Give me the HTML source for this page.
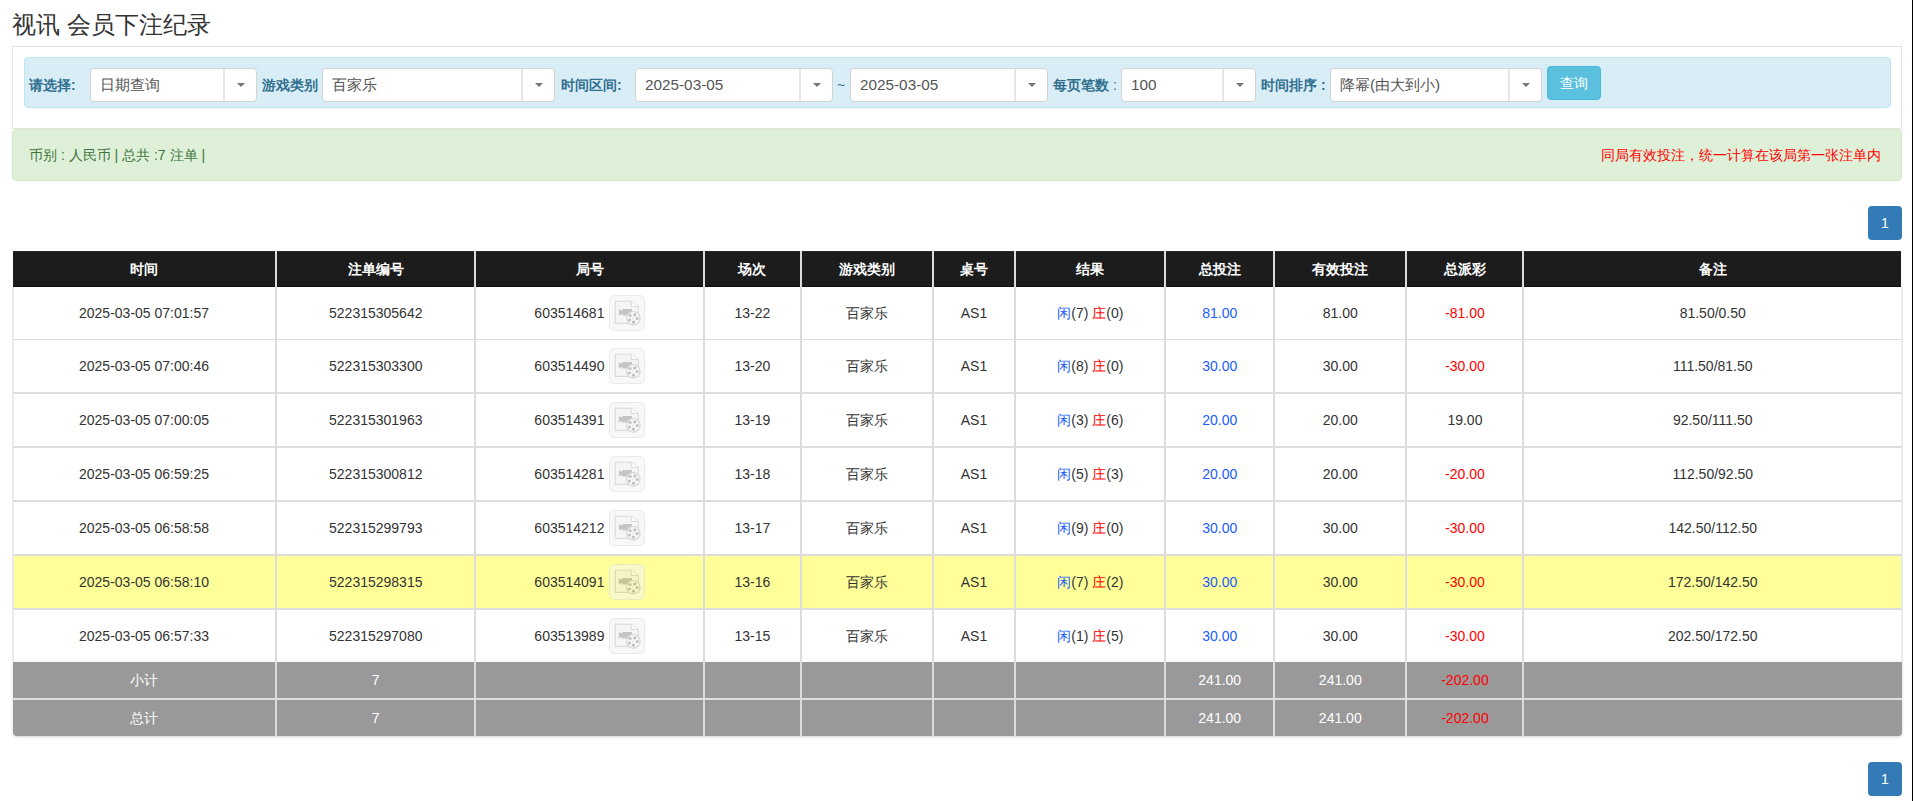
<!DOCTYPE html><html><head><meta charset="utf-8"><title>视讯 会员下注纪录</title><style>
*{box-sizing:border-box;margin:0;padding:0}
html,body{width:1913px;height:801px;overflow:hidden;background:#fff}
body{position:relative;font-family:"Liberation Sans",sans-serif;font-size:14px;color:#333}
.a{position:absolute}
.t{position:absolute;white-space:nowrap;line-height:20px}
.c{position:absolute;display:flex;align-items:center;justify-content:center;white-space:nowrap;line-height:20px}
.sel{position:absolute;top:68px;height:34px;background:#fff;border:1px solid #d3d3d3;border-radius:4px}
.sel .v{position:absolute;left:9px;top:6px;font-size:15.3px;line-height:20px;color:#555}
.sel .d{position:absolute;top:0;bottom:0;width:2px;background:#e6e6e6}
.sel .k{position:absolute;top:14px;width:0;height:0;border-left:4px solid transparent;border-right:4px solid transparent;border-top:4px solid #777}
.lb{position:absolute;top:75px;font-weight:bold;color:#31708f;line-height:20px}
.h{color:#fff;font-weight:bold}
.hl{background:#dcdcdc}
.blue{color:#1a5cff}
.red{color:#ff0000}
</style></head><body>
<div class="t" style="left:12px;top:11px;font-size:24px;line-height:28px;color:#333">视讯 会员下注纪录</div>
<div class="a" style="left:12px;top:46px;width:1890px;height:83px;border:1px solid #e3e3e3;background:#fff"></div>
<div class="a" style="left:24px;top:57px;width:1867px;height:51px;border:1px solid #bce8f1;background:#d9edf7;border-radius:4px"></div>
<div class="lb" style="left:29px">请选择:</div>
<div class="lb" style="left:262px">游戏类别</div>
<div class="lb" style="left:561px">时间区间:</div>
<div class="lb" style="left:1053px">每页笔数<span style="font-weight:normal"> :</span></div>
<div class="lb" style="left:1261px">时间排序 :</div>
<div class="lb" style="left:837px;font-weight:normal">~</div>
<div class="sel" style="left:90px;width:167px"><div class="v">日期查询</div><div class="d" style="left:132px"></div><div class="k" style="left:146px"></div></div>
<div class="sel" style="left:322px;width:233px"><div class="v">百家乐</div><div class="d" style="left:198px"></div><div class="k" style="left:212px"></div></div>
<div class="sel" style="left:635px;width:198px"><div class="v">2025-03-05</div><div class="d" style="left:163px"></div><div class="k" style="left:177px"></div></div>
<div class="sel" style="left:850px;width:198px"><div class="v">2025-03-05</div><div class="d" style="left:163px"></div><div class="k" style="left:177px"></div></div>
<div class="sel" style="left:1121px;width:135px"><div class="v">100</div><div class="d" style="left:100px"></div><div class="k" style="left:114px"></div></div>
<div class="sel" style="left:1330px;width:212px"><div class="v">降幂(由大到小)</div><div class="d" style="left:177px"></div><div class="k" style="left:191px"></div></div>
<div class="c" style="left:1547px;top:66px;width:54px;height:34px;background:#5bc0de;border:1px solid #46b8da;border-radius:4px;color:#fff">查询</div>
<div class="a" style="left:12px;top:129px;width:1890px;height:52px;border:1px solid #d6e9c6;background:#dff0d8;border-radius:4px"></div>
<div class="t" style="left:29px;top:145px;color:#3c763d">币别 : 人民币 | 总共 :7 注单 |</div>
<div class="t" style="right:32px;top:145px;color:#ff0000">同局有效投注，统一计算在该局第一张注单内</div>
<div class="c" style="left:1868px;top:206px;width:34px;height:34px;background:#337ab7;border-radius:4px;color:#fff">1</div>
<div class="c" style="left:1868px;top:762px;width:34px;height:34px;background:#337ab7;border-radius:4px;color:#fff">1</div>
<div class="a" style="left:1912px;top:0;width:1px;height:801px;background:#000"></div>
<div class="a" style="left:13px;top:251px;width:1888px;height:36px;background:#1c1c1c;border-top:1px solid #282828;border-bottom:1px solid #0c0c0c"></div>
<div class="a" style="left:12px;top:287px;width:1891px;height:375px;background:#fff;border-left:2px solid #ebebeb;border-right:2px solid #ebebeb"></div>
<div class="a" style="left:14px;top:556px;width:1887px;height:52px;background:#ffff99"></div>
<div class="a hl" style="left:13px;top:339px;width:1889px;height:1px"></div>
<div class="a hl" style="left:13px;top:392px;width:1889px;height:2px"></div>
<div class="a hl" style="left:13px;top:446px;width:1889px;height:2px"></div>
<div class="a hl" style="left:13px;top:500px;width:1889px;height:2px"></div>
<div class="a hl" style="left:13px;top:554px;width:1889px;height:2px"></div>
<div class="a hl" style="left:13px;top:608px;width:1889px;height:2px"></div>
<div class="a" style="left:13px;top:662px;width:1889px;height:74px;background:#999;border-radius:0 0 4px 4px;box-shadow:0 1px 3px rgba(0,0,0,.18)"></div>
<div class="a" style="left:12px;top:698px;width:1890px;height:2px;background:#e0e0e0"></div>
<div class="a" style="left:275px;top:251px;width:2px;height:485px;background:#dcdcdc"></div>
<div class="a" style="left:474px;top:251px;width:2px;height:485px;background:#dcdcdc"></div>
<div class="a" style="left:703px;top:251px;width:2px;height:485px;background:#dcdcdc"></div>
<div class="a" style="left:800px;top:251px;width:2px;height:485px;background:#dcdcdc"></div>
<div class="a" style="left:932px;top:251px;width:2px;height:485px;background:#dcdcdc"></div>
<div class="a" style="left:1014px;top:251px;width:2px;height:485px;background:#dcdcdc"></div>
<div class="a" style="left:1164px;top:251px;width:2px;height:485px;background:#dcdcdc"></div>
<div class="a" style="left:1273px;top:251px;width:2px;height:485px;background:#dcdcdc"></div>
<div class="a" style="left:1405px;top:251px;width:2px;height:485px;background:#dcdcdc"></div>
<div class="a" style="left:1522px;top:251px;width:2px;height:485px;background:#dcdcdc"></div>
<div class="c h" style="left:12.0px;top:251px;width:264.0px;height:36px;"><span>时间</span></div>
<div class="c h" style="left:276.0px;top:251px;width:199.5px;height:36px;"><span>注单编号</span></div>
<div class="c h" style="left:475.5px;top:251px;width:228.8px;height:36px;"><span>局号</span></div>
<div class="c h" style="left:704.3px;top:251px;width:96.2px;height:36px;"><span>场次</span></div>
<div class="c h" style="left:800.5px;top:251px;width:132.0px;height:36px;"><span>游戏类别</span></div>
<div class="c h" style="left:932.5px;top:251px;width:83.0px;height:36px;"><span>桌号</span></div>
<div class="c h" style="left:1015.5px;top:251px;width:149.8px;height:36px;"><span>结果</span></div>
<div class="c h" style="left:1165.3px;top:251px;width:108.9px;height:36px;"><span>总投注</span></div>
<div class="c h" style="left:1274.2px;top:251px;width:132.2px;height:36px;"><span>有效投注</span></div>
<div class="c h" style="left:1406.4px;top:251px;width:117.1px;height:36px;"><span>总派彩</span></div>
<div class="c h" style="left:1523.5px;top:251px;width:378.5px;height:36px;"><span>备注</span></div>
<div class="c " style="left:12.0px;top:287px;width:264.0px;height:52px;"><span>2025-03-05 07:01:57</span></div>
<div class="c " style="left:276.0px;top:287px;width:199.5px;height:52px;"><span>522315305642</span></div>
<div class="c " style="left:475.5px;top:287px;width:228.8px;height:52px;"><span><span style="margin-left:0">603514681</span><svg width="36" height="36" viewBox="0 0 36 36" style="margin:-12px 0 -12px 5px;opacity:.53;vertical-align:middle;position:relative;top:-1px"><rect x="0.5" y="0.5" width="35" height="35" rx="5" fill="#f2f2f2" stroke="#d9d9d9"/><path d="M6.2 6.3 H22.3 L29.4 11.5 V28.4 H6.2 Z" fill="#eeeeee" stroke="#bcbcbc" stroke-width="1.1"/><path d="M22.3 6.3 V11.5 H29.4" fill="#fafafa" stroke="#bcbcbc" stroke-width="1.1"/><path d="M9.9 14.1 L11.4 15.3 H13.6 V14.1 H23 V20.5 H13.6 V19.4 H11.4 L9.9 20.5 Z" fill="#939393"/><circle cx="24.3" cy="23.3" r="6.8" fill="#f0f0f0" stroke="#b0b0b0" stroke-width="1.1"/><circle cx="21.1" cy="20.5" r="1.6" fill="#8c8c8c"/><circle cx="25.8" cy="19.9" r="1.6" fill="#8c8c8c"/><circle cx="28.2" cy="23.5" r="1.6" fill="#8c8c8c"/><circle cx="20.4" cy="25" r="1.6" fill="#8c8c8c"/><circle cx="24.5" cy="27.2" r="1.6" fill="#8c8c8c"/><circle cx="23.8" cy="23.2" r="0.5" fill="#8c8c8c"/></svg></span></div>
<div class="c " style="left:704.3px;top:287px;width:96.2px;height:52px;"><span>13-22</span></div>
<div class="c " style="left:800.5px;top:287px;width:132.0px;height:52px;"><span>百家乐</span></div>
<div class="c " style="left:932.5px;top:287px;width:83.0px;height:52px;"><span>AS1</span></div>
<div class="c " style="left:1015.5px;top:287px;width:149.8px;height:52px;"><span><span class="blue">闲</span>(7) <span class="red">庄</span>(0)</span></div>
<div class="c blue" style="left:1165.3px;top:287px;width:108.9px;height:52px;"><span>81.00</span></div>
<div class="c " style="left:1274.2px;top:287px;width:132.2px;height:52px;"><span>81.00</span></div>
<div class="c red" style="left:1406.4px;top:287px;width:117.1px;height:52px;"><span>-81.00</span></div>
<div class="c " style="left:1523.5px;top:287px;width:378.5px;height:52px;"><span>81.50/0.50</span></div>
<div class="c " style="left:12.0px;top:339px;width:264.0px;height:54px;"><span>2025-03-05 07:00:46</span></div>
<div class="c " style="left:276.0px;top:339px;width:199.5px;height:54px;"><span>522315303300</span></div>
<div class="c " style="left:475.5px;top:339px;width:228.8px;height:54px;"><span><span style="margin-left:0">603514490</span><svg width="36" height="36" viewBox="0 0 36 36" style="margin:-12px 0 -12px 5px;opacity:.53;vertical-align:middle;position:relative;top:-1px"><rect x="0.5" y="0.5" width="35" height="35" rx="5" fill="#f2f2f2" stroke="#d9d9d9"/><path d="M6.2 6.3 H22.3 L29.4 11.5 V28.4 H6.2 Z" fill="#eeeeee" stroke="#bcbcbc" stroke-width="1.1"/><path d="M22.3 6.3 V11.5 H29.4" fill="#fafafa" stroke="#bcbcbc" stroke-width="1.1"/><path d="M9.9 14.1 L11.4 15.3 H13.6 V14.1 H23 V20.5 H13.6 V19.4 H11.4 L9.9 20.5 Z" fill="#939393"/><circle cx="24.3" cy="23.3" r="6.8" fill="#f0f0f0" stroke="#b0b0b0" stroke-width="1.1"/><circle cx="21.1" cy="20.5" r="1.6" fill="#8c8c8c"/><circle cx="25.8" cy="19.9" r="1.6" fill="#8c8c8c"/><circle cx="28.2" cy="23.5" r="1.6" fill="#8c8c8c"/><circle cx="20.4" cy="25" r="1.6" fill="#8c8c8c"/><circle cx="24.5" cy="27.2" r="1.6" fill="#8c8c8c"/><circle cx="23.8" cy="23.2" r="0.5" fill="#8c8c8c"/></svg></span></div>
<div class="c " style="left:704.3px;top:339px;width:96.2px;height:54px;"><span>13-20</span></div>
<div class="c " style="left:800.5px;top:339px;width:132.0px;height:54px;"><span>百家乐</span></div>
<div class="c " style="left:932.5px;top:339px;width:83.0px;height:54px;"><span>AS1</span></div>
<div class="c " style="left:1015.5px;top:339px;width:149.8px;height:54px;"><span><span class="blue">闲</span>(8) <span class="red">庄</span>(0)</span></div>
<div class="c blue" style="left:1165.3px;top:339px;width:108.9px;height:54px;"><span>30.00</span></div>
<div class="c " style="left:1274.2px;top:339px;width:132.2px;height:54px;"><span>30.00</span></div>
<div class="c red" style="left:1406.4px;top:339px;width:117.1px;height:54px;"><span>-30.00</span></div>
<div class="c " style="left:1523.5px;top:339px;width:378.5px;height:54px;"><span>111.50/81.50</span></div>
<div class="c " style="left:12.0px;top:393px;width:264.0px;height:54px;"><span>2025-03-05 07:00:05</span></div>
<div class="c " style="left:276.0px;top:393px;width:199.5px;height:54px;"><span>522315301963</span></div>
<div class="c " style="left:475.5px;top:393px;width:228.8px;height:54px;"><span><span style="margin-left:0">603514391</span><svg width="36" height="36" viewBox="0 0 36 36" style="margin:-12px 0 -12px 5px;opacity:.53;vertical-align:middle;position:relative;top:-1px"><rect x="0.5" y="0.5" width="35" height="35" rx="5" fill="#f2f2f2" stroke="#d9d9d9"/><path d="M6.2 6.3 H22.3 L29.4 11.5 V28.4 H6.2 Z" fill="#eeeeee" stroke="#bcbcbc" stroke-width="1.1"/><path d="M22.3 6.3 V11.5 H29.4" fill="#fafafa" stroke="#bcbcbc" stroke-width="1.1"/><path d="M9.9 14.1 L11.4 15.3 H13.6 V14.1 H23 V20.5 H13.6 V19.4 H11.4 L9.9 20.5 Z" fill="#939393"/><circle cx="24.3" cy="23.3" r="6.8" fill="#f0f0f0" stroke="#b0b0b0" stroke-width="1.1"/><circle cx="21.1" cy="20.5" r="1.6" fill="#8c8c8c"/><circle cx="25.8" cy="19.9" r="1.6" fill="#8c8c8c"/><circle cx="28.2" cy="23.5" r="1.6" fill="#8c8c8c"/><circle cx="20.4" cy="25" r="1.6" fill="#8c8c8c"/><circle cx="24.5" cy="27.2" r="1.6" fill="#8c8c8c"/><circle cx="23.8" cy="23.2" r="0.5" fill="#8c8c8c"/></svg></span></div>
<div class="c " style="left:704.3px;top:393px;width:96.2px;height:54px;"><span>13-19</span></div>
<div class="c " style="left:800.5px;top:393px;width:132.0px;height:54px;"><span>百家乐</span></div>
<div class="c " style="left:932.5px;top:393px;width:83.0px;height:54px;"><span>AS1</span></div>
<div class="c " style="left:1015.5px;top:393px;width:149.8px;height:54px;"><span><span class="blue">闲</span>(3) <span class="red">庄</span>(6)</span></div>
<div class="c blue" style="left:1165.3px;top:393px;width:108.9px;height:54px;"><span>20.00</span></div>
<div class="c " style="left:1274.2px;top:393px;width:132.2px;height:54px;"><span>20.00</span></div>
<div class="c " style="left:1406.4px;top:393px;width:117.1px;height:54px;"><span>19.00</span></div>
<div class="c " style="left:1523.5px;top:393px;width:378.5px;height:54px;"><span>92.50/111.50</span></div>
<div class="c " style="left:12.0px;top:447px;width:264.0px;height:54px;"><span>2025-03-05 06:59:25</span></div>
<div class="c " style="left:276.0px;top:447px;width:199.5px;height:54px;"><span>522315300812</span></div>
<div class="c " style="left:475.5px;top:447px;width:228.8px;height:54px;"><span><span style="margin-left:0">603514281</span><svg width="36" height="36" viewBox="0 0 36 36" style="margin:-12px 0 -12px 5px;opacity:.53;vertical-align:middle;position:relative;top:-1px"><rect x="0.5" y="0.5" width="35" height="35" rx="5" fill="#f2f2f2" stroke="#d9d9d9"/><path d="M6.2 6.3 H22.3 L29.4 11.5 V28.4 H6.2 Z" fill="#eeeeee" stroke="#bcbcbc" stroke-width="1.1"/><path d="M22.3 6.3 V11.5 H29.4" fill="#fafafa" stroke="#bcbcbc" stroke-width="1.1"/><path d="M9.9 14.1 L11.4 15.3 H13.6 V14.1 H23 V20.5 H13.6 V19.4 H11.4 L9.9 20.5 Z" fill="#939393"/><circle cx="24.3" cy="23.3" r="6.8" fill="#f0f0f0" stroke="#b0b0b0" stroke-width="1.1"/><circle cx="21.1" cy="20.5" r="1.6" fill="#8c8c8c"/><circle cx="25.8" cy="19.9" r="1.6" fill="#8c8c8c"/><circle cx="28.2" cy="23.5" r="1.6" fill="#8c8c8c"/><circle cx="20.4" cy="25" r="1.6" fill="#8c8c8c"/><circle cx="24.5" cy="27.2" r="1.6" fill="#8c8c8c"/><circle cx="23.8" cy="23.2" r="0.5" fill="#8c8c8c"/></svg></span></div>
<div class="c " style="left:704.3px;top:447px;width:96.2px;height:54px;"><span>13-18</span></div>
<div class="c " style="left:800.5px;top:447px;width:132.0px;height:54px;"><span>百家乐</span></div>
<div class="c " style="left:932.5px;top:447px;width:83.0px;height:54px;"><span>AS1</span></div>
<div class="c " style="left:1015.5px;top:447px;width:149.8px;height:54px;"><span><span class="blue">闲</span>(5) <span class="red">庄</span>(3)</span></div>
<div class="c blue" style="left:1165.3px;top:447px;width:108.9px;height:54px;"><span>20.00</span></div>
<div class="c " style="left:1274.2px;top:447px;width:132.2px;height:54px;"><span>20.00</span></div>
<div class="c red" style="left:1406.4px;top:447px;width:117.1px;height:54px;"><span>-20.00</span></div>
<div class="c " style="left:1523.5px;top:447px;width:378.5px;height:54px;"><span>112.50/92.50</span></div>
<div class="c " style="left:12.0px;top:501px;width:264.0px;height:54px;"><span>2025-03-05 06:58:58</span></div>
<div class="c " style="left:276.0px;top:501px;width:199.5px;height:54px;"><span>522315299793</span></div>
<div class="c " style="left:475.5px;top:501px;width:228.8px;height:54px;"><span><span style="margin-left:0">603514212</span><svg width="36" height="36" viewBox="0 0 36 36" style="margin:-12px 0 -12px 5px;opacity:.53;vertical-align:middle;position:relative;top:-1px"><rect x="0.5" y="0.5" width="35" height="35" rx="5" fill="#f2f2f2" stroke="#d9d9d9"/><path d="M6.2 6.3 H22.3 L29.4 11.5 V28.4 H6.2 Z" fill="#eeeeee" stroke="#bcbcbc" stroke-width="1.1"/><path d="M22.3 6.3 V11.5 H29.4" fill="#fafafa" stroke="#bcbcbc" stroke-width="1.1"/><path d="M9.9 14.1 L11.4 15.3 H13.6 V14.1 H23 V20.5 H13.6 V19.4 H11.4 L9.9 20.5 Z" fill="#939393"/><circle cx="24.3" cy="23.3" r="6.8" fill="#f0f0f0" stroke="#b0b0b0" stroke-width="1.1"/><circle cx="21.1" cy="20.5" r="1.6" fill="#8c8c8c"/><circle cx="25.8" cy="19.9" r="1.6" fill="#8c8c8c"/><circle cx="28.2" cy="23.5" r="1.6" fill="#8c8c8c"/><circle cx="20.4" cy="25" r="1.6" fill="#8c8c8c"/><circle cx="24.5" cy="27.2" r="1.6" fill="#8c8c8c"/><circle cx="23.8" cy="23.2" r="0.5" fill="#8c8c8c"/></svg></span></div>
<div class="c " style="left:704.3px;top:501px;width:96.2px;height:54px;"><span>13-17</span></div>
<div class="c " style="left:800.5px;top:501px;width:132.0px;height:54px;"><span>百家乐</span></div>
<div class="c " style="left:932.5px;top:501px;width:83.0px;height:54px;"><span>AS1</span></div>
<div class="c " style="left:1015.5px;top:501px;width:149.8px;height:54px;"><span><span class="blue">闲</span>(9) <span class="red">庄</span>(0)</span></div>
<div class="c blue" style="left:1165.3px;top:501px;width:108.9px;height:54px;"><span>30.00</span></div>
<div class="c " style="left:1274.2px;top:501px;width:132.2px;height:54px;"><span>30.00</span></div>
<div class="c red" style="left:1406.4px;top:501px;width:117.1px;height:54px;"><span>-30.00</span></div>
<div class="c " style="left:1523.5px;top:501px;width:378.5px;height:54px;"><span>142.50/112.50</span></div>
<div class="c " style="left:12.0px;top:555px;width:264.0px;height:54px;"><span>2025-03-05 06:58:10</span></div>
<div class="c " style="left:276.0px;top:555px;width:199.5px;height:54px;"><span>522315298315</span></div>
<div class="c " style="left:475.5px;top:555px;width:228.8px;height:54px;"><span><span style="margin-left:0">603514091</span><svg width="36" height="36" viewBox="0 0 36 36" style="margin:-12px 0 -12px 5px;opacity:.53;vertical-align:middle;position:relative;top:-1px"><rect x="0.5" y="0.5" width="35" height="35" rx="5" fill="#f2f2f2" stroke="#d9d9d9"/><path d="M6.2 6.3 H22.3 L29.4 11.5 V28.4 H6.2 Z" fill="#eeeeee" stroke="#bcbcbc" stroke-width="1.1"/><path d="M22.3 6.3 V11.5 H29.4" fill="#fafafa" stroke="#bcbcbc" stroke-width="1.1"/><path d="M9.9 14.1 L11.4 15.3 H13.6 V14.1 H23 V20.5 H13.6 V19.4 H11.4 L9.9 20.5 Z" fill="#939393"/><circle cx="24.3" cy="23.3" r="6.8" fill="#f0f0f0" stroke="#b0b0b0" stroke-width="1.1"/><circle cx="21.1" cy="20.5" r="1.6" fill="#8c8c8c"/><circle cx="25.8" cy="19.9" r="1.6" fill="#8c8c8c"/><circle cx="28.2" cy="23.5" r="1.6" fill="#8c8c8c"/><circle cx="20.4" cy="25" r="1.6" fill="#8c8c8c"/><circle cx="24.5" cy="27.2" r="1.6" fill="#8c8c8c"/><circle cx="23.8" cy="23.2" r="0.5" fill="#8c8c8c"/></svg></span></div>
<div class="c " style="left:704.3px;top:555px;width:96.2px;height:54px;"><span>13-16</span></div>
<div class="c " style="left:800.5px;top:555px;width:132.0px;height:54px;"><span>百家乐</span></div>
<div class="c " style="left:932.5px;top:555px;width:83.0px;height:54px;"><span>AS1</span></div>
<div class="c " style="left:1015.5px;top:555px;width:149.8px;height:54px;"><span><span class="blue">闲</span>(7) <span class="red">庄</span>(2)</span></div>
<div class="c blue" style="left:1165.3px;top:555px;width:108.9px;height:54px;"><span>30.00</span></div>
<div class="c " style="left:1274.2px;top:555px;width:132.2px;height:54px;"><span>30.00</span></div>
<div class="c red" style="left:1406.4px;top:555px;width:117.1px;height:54px;"><span>-30.00</span></div>
<div class="c " style="left:1523.5px;top:555px;width:378.5px;height:54px;"><span>172.50/142.50</span></div>
<div class="c " style="left:12.0px;top:609px;width:264.0px;height:53px;"><span>2025-03-05 06:57:33</span></div>
<div class="c " style="left:276.0px;top:609px;width:199.5px;height:53px;"><span>522315297080</span></div>
<div class="c " style="left:475.5px;top:609px;width:228.8px;height:53px;"><span><span style="margin-left:0">603513989</span><svg width="36" height="36" viewBox="0 0 36 36" style="margin:-12px 0 -12px 5px;opacity:.53;vertical-align:middle;position:relative;top:-1px"><rect x="0.5" y="0.5" width="35" height="35" rx="5" fill="#f2f2f2" stroke="#d9d9d9"/><path d="M6.2 6.3 H22.3 L29.4 11.5 V28.4 H6.2 Z" fill="#eeeeee" stroke="#bcbcbc" stroke-width="1.1"/><path d="M22.3 6.3 V11.5 H29.4" fill="#fafafa" stroke="#bcbcbc" stroke-width="1.1"/><path d="M9.9 14.1 L11.4 15.3 H13.6 V14.1 H23 V20.5 H13.6 V19.4 H11.4 L9.9 20.5 Z" fill="#939393"/><circle cx="24.3" cy="23.3" r="6.8" fill="#f0f0f0" stroke="#b0b0b0" stroke-width="1.1"/><circle cx="21.1" cy="20.5" r="1.6" fill="#8c8c8c"/><circle cx="25.8" cy="19.9" r="1.6" fill="#8c8c8c"/><circle cx="28.2" cy="23.5" r="1.6" fill="#8c8c8c"/><circle cx="20.4" cy="25" r="1.6" fill="#8c8c8c"/><circle cx="24.5" cy="27.2" r="1.6" fill="#8c8c8c"/><circle cx="23.8" cy="23.2" r="0.5" fill="#8c8c8c"/></svg></span></div>
<div class="c " style="left:704.3px;top:609px;width:96.2px;height:53px;"><span>13-15</span></div>
<div class="c " style="left:800.5px;top:609px;width:132.0px;height:53px;"><span>百家乐</span></div>
<div class="c " style="left:932.5px;top:609px;width:83.0px;height:53px;"><span>AS1</span></div>
<div class="c " style="left:1015.5px;top:609px;width:149.8px;height:53px;"><span><span class="blue">闲</span>(1) <span class="red">庄</span>(5)</span></div>
<div class="c blue" style="left:1165.3px;top:609px;width:108.9px;height:53px;"><span>30.00</span></div>
<div class="c " style="left:1274.2px;top:609px;width:132.2px;height:53px;"><span>30.00</span></div>
<div class="c red" style="left:1406.4px;top:609px;width:117.1px;height:53px;"><span>-30.00</span></div>
<div class="c " style="left:1523.5px;top:609px;width:378.5px;height:53px;"><span>202.50/172.50</span></div>
<div class="c " style="left:12.0px;top:662px;width:264.0px;height:36px;color:#fff"><span>小计</span></div>
<div class="c " style="left:276.0px;top:662px;width:199.5px;height:36px;color:#fff"><span>7</span></div>
<div class="c " style="left:1165.3px;top:662px;width:108.9px;height:36px;color:#fff"><span>241.00</span></div>
<div class="c " style="left:1274.2px;top:662px;width:132.2px;height:36px;color:#fff"><span>241.00</span></div>
<div class="c red" style="left:1406.4px;top:662px;width:117.1px;height:36px;"><span>-202.00</span></div>
<div class="c " style="left:12.0px;top:700px;width:264.0px;height:36px;color:#fff"><span>总计</span></div>
<div class="c " style="left:276.0px;top:700px;width:199.5px;height:36px;color:#fff"><span>7</span></div>
<div class="c " style="left:1165.3px;top:700px;width:108.9px;height:36px;color:#fff"><span>241.00</span></div>
<div class="c " style="left:1274.2px;top:700px;width:132.2px;height:36px;color:#fff"><span>241.00</span></div>
<div class="c red" style="left:1406.4px;top:700px;width:117.1px;height:36px;"><span>-202.00</span></div>
</body></html>
